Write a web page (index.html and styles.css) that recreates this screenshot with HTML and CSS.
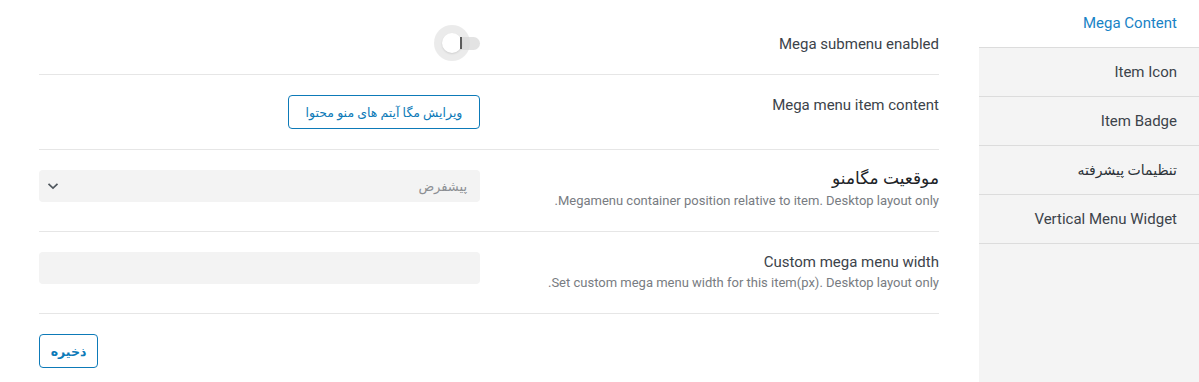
FILE: index.html
```html
<!DOCTYPE html>
<html lang="fa" dir="rtl">
<head>
<meta charset="utf-8">
<title>Mega menu settings</title>
<link rel="stylesheet" href="styles.css">
</head>
<body>
<div class="layout">
  <nav class="tabs">
    <div class="tab active">Mega Content</div>
    <div class="tab">Item Icon</div>
    <div class="tab">Item Badge</div>
    <div class="tab fa">تنظیمات پیشرفته</div>
    <div class="tab">Vertical Menu Widget</div>
  </nav>
  <main class="panel">
    <div class="row row-first">
      <div class="label"><div class="title">Mega submenu enabled</div></div>
      <div class="control">
        <span class="toggle">
          <span class="track"></span>
          <span class="halo"></span>
          <span class="knob"></span>
          <span class="mark"></span>
        </span>
      </div>
    </div>
    <div class="row row-btn">
      <div class="label"><div class="title">Mega menu item content</div></div>
      <div class="control">
        <button class="btn btn-edit">ویرایش مگا آیتم های منو محتوا</button>
      </div>
    </div>
    <div class="row">
      <div class="label">
        <div class="title fa-title">موقعیت مگامنو</div>
        <div class="desc">Megamenu container position relative to item. Desktop layout only.</div>
      </div>
      <div class="control">
        <div class="select">
          <span class="select-text">پیشفرض</span>
          <svg class="chev" width="12" height="8" viewBox="0 0 12 8"><path d="M1.5 1.8 L6 6 L10.5 1.8" fill="none" stroke="#50575e" stroke-width="1.7"/></svg>
        </div>
      </div>
    </div>
    <div class="row">
      <div class="label">
        <div class="title">Custom mega menu width</div>
        <div class="desc">Set custom mega menu width for this item(px). Desktop layout only.</div>
      </div>
      <div class="control">
        <div class="input"></div>
      </div>
    </div>
    <div class="footer">
      <button class="btn btn-save">ذخیره</button>
    </div>
  </main>
</div>
</body>
</html>
```

FILE: styles.css
```css
* { box-sizing: border-box; }
html, body { margin: 0; padding: 0; background: #fff; }
body {
  font-family: Roboto, "DejaVu Sans", sans-serif;
  color: #3c434a;
  width: 1199px;
  height: 382px;
  overflow: hidden;
}
.layout {
  display: flex;
  gap: 40px;
  height: 382px;
}
.tabs {
  width: 220px;
  flex: none;
  background: #f4f4f4;
  display: flex;
  flex-direction: column;
}
.tab {
  height: 49px;
  border-bottom: 1px solid #dcdcdc;
  padding: 0 22px 0 0;
  display: flex;
  align-items: center;
  font-size: 15px;
  color: #3c434a;
  padding-bottom: 1px;
}
.tab.active {
  background: #fff;
  color: #1883c6;
  height: 48px;
  padding-bottom: 2px;
}
.tab.fa { font-size: 14px; color: #2c3338; }
.panel {
  width: 900px;
  flex: none;
}
.row {
  display: grid;
  grid-template-columns: 1fr 1fr;
  column-gap: 18px;
  padding: 20px 0;
  border-bottom: 1px solid #e6e6e6;
}
.row-first {
  padding: 26px 0 14px;
}
.row-first .title { margin-top: 8px; }
.label {
  text-align: right;
}
.title {
  font-size: 15px;
  line-height: 20px;
  color: #3c434a;
}
.fa-title {
  font-size: 17px;
  font-weight: 500;
  color: #1d2327;
  line-height: 20px;
  margin-top: -2px;
  margin-bottom: 2px;
}
.desc {
  font-size: 13px;
  line-height: 21px;
  color: #787c82;
}
.control {
  display: flex;
  justify-content: flex-start;
  align-items: flex-start;
}
.toggle {
  position: relative;
  width: 46px;
  height: 34px;
  display: block;
}
.toggle .track {
  position: absolute;
  right: 0;
  top: 11px;
  width: 36px;
  height: 13px;
  border-radius: 7px;
  background: #e3e3e3;
}
.toggle .halo {
  position: absolute;
  left: 0;
  top: -1px;
  width: 36px;
  height: 36px;
  border-radius: 50%;
  background: rgba(215, 215, 215, 0.5);
}
.toggle .knob {
  position: absolute;
  left: 8px;
  top: 7px;
  width: 20px;
  height: 20px;
  border-radius: 50%;
  background: #fff;
  box-shadow: 0 1px 2px rgba(0,0,0,0.12);
}
.toggle .mark {
  position: absolute;
  left: 26px;
  top: 11px;
  width: 1.5px;
  height: 12px;
  background: #5a5a5a;
}
.btn {
  font-family: Roboto, "DejaVu Sans", sans-serif;
  height: 34px;
  border: 1px solid #0d7ab8;
  border-radius: 4px;
  background: #fff;
  color: #0d7ab8;
  font-size: 12.5px;
  font-weight: 400;
  white-space: nowrap;
  padding: 0 8px;
  cursor: pointer;
}
.btn-edit { width: 192px; }
.btn-save { width: 59px; padding: 0; font-weight: 700; }
.select {
  width: 100%;
  height: 32px;
  border-radius: 4px;
  background: #f3f3f3;
  display: flex;
  align-items: center;
  justify-content: space-between;
  padding: 0 13px 0 8px;
}
.select-text {
  font-size: 13px;
  color: #8c8f94;
}
.chev { display: block; }
.input {
  width: 100%;
  height: 32px;
  border-radius: 4px;
  background: #f3f3f3;
}
.footer {
  display: flex;
  justify-content: flex-end;
  padding-top: 20px;
}
```
